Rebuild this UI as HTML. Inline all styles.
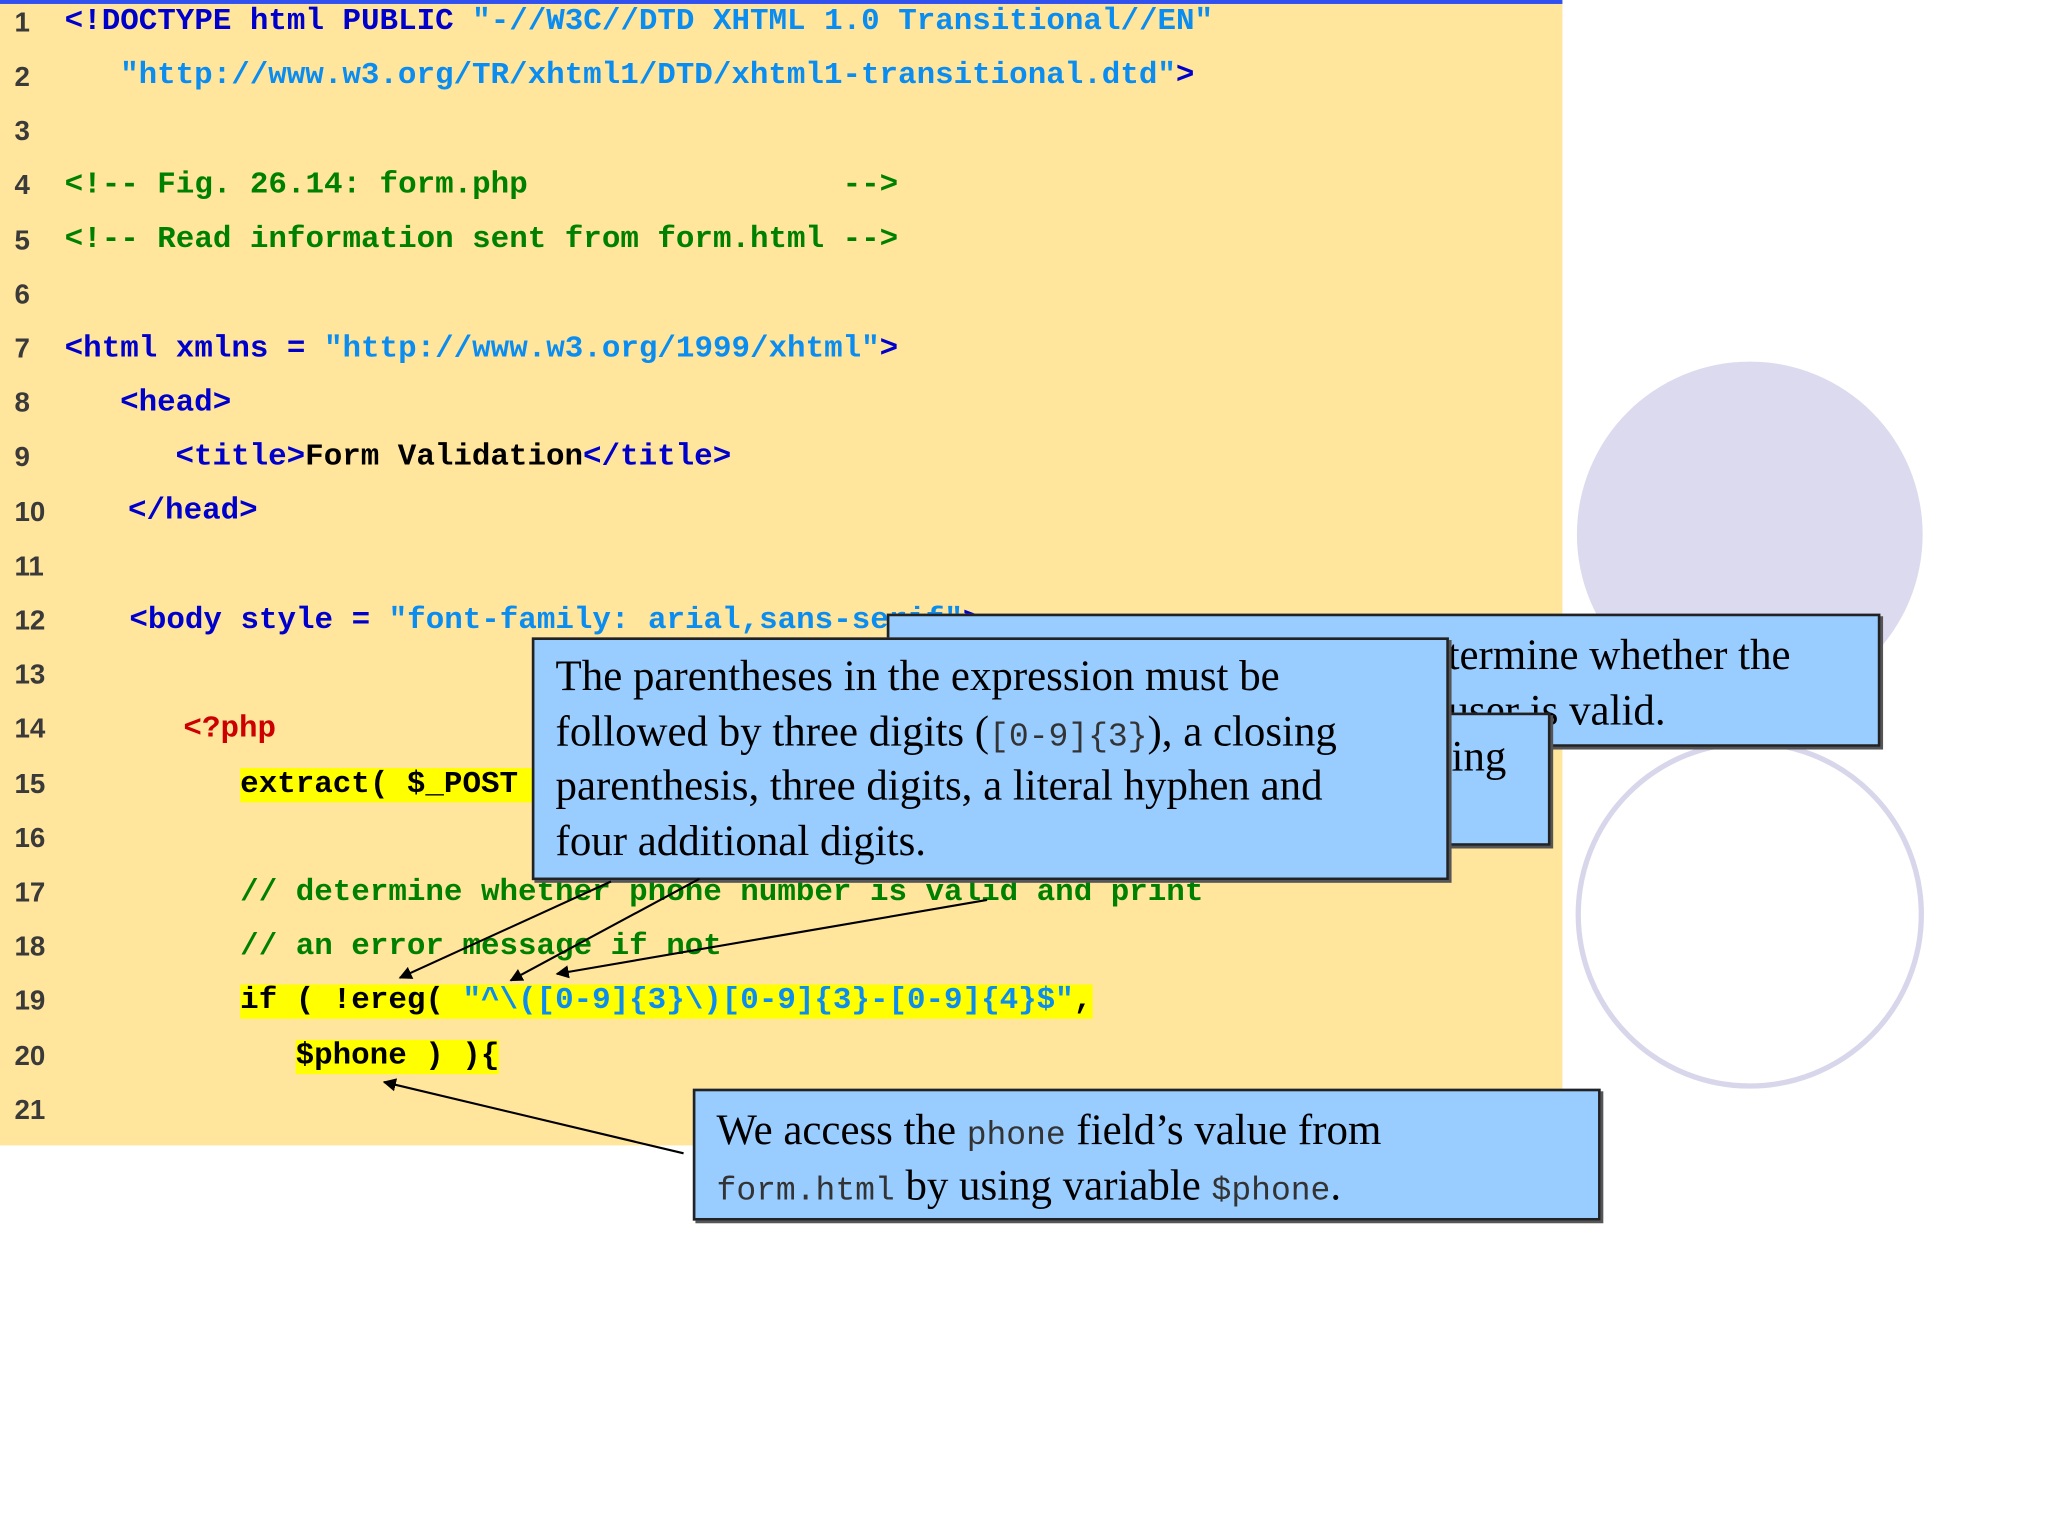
<!DOCTYPE html>
<html><head><style>
html,body{margin:0;padding:0;background:#fff;}
body{width:2048px;height:1536px;overflow:hidden;position:relative;}
#w{position:absolute;left:0;top:0;width:1552px;height:1164px;transform:scale(1.3196);transform-origin:0 0;}
.code{position:absolute;left:0;top:0;width:1184px;height:868px;background:#ffe69c;border-top:3px solid #3050f0;box-sizing:border-box;}
.n{position:absolute;left:11px;font:bold 21px "Liberation Sans",sans-serif;color:#3a3a3a;line-height:41px;}
.l{position:absolute;font:bold 23.4px "Liberation Mono",monospace;line-height:41px;white-space:pre;color:#000;}
.t{color:#0000cc}.s{color:#0a8cf0}.c{color:#008000}.p{color:#cc0000}
.hl{background:#ffff00;}
.box{position:absolute;background:#99ccff;border:2px solid #222;box-shadow:2px 2px 0 #555;box-sizing:border-box;font:32.5px "Liberation Serif",serif;color:#000;line-height:41.5px;overflow:hidden;}
.m{font:25px "Liberation Mono",monospace;color:#333;}
</style></head><body><div id="w">
<svg style="position:absolute;left:0;top:0" width="1552" height="1164">
<circle cx="1326" cy="405" r="131" fill="#dcdaee"/>
<circle cx="1326" cy="693" r="130" fill="none" stroke="#d8d6ea" stroke-width="4"/>
</svg>
<div class="code"></div>
<div class="n" style="top:-3px">1</div><div class="n" style="top:38px">2</div><div class="n" style="top:79px">3</div><div class="n" style="top:120px">4</div><div class="n" style="top:162px">5</div><div class="n" style="top:203px">6</div><div class="n" style="top:244px">7</div><div class="n" style="top:285px">8</div><div class="n" style="top:326px">9</div><div class="n" style="top:368px">10</div><div class="n" style="top:409px">11</div><div class="n" style="top:450px">12</div><div class="n" style="top:491px">13</div><div class="n" style="top:532px">14</div><div class="n" style="top:574px">15</div><div class="n" style="top:615px">16</div><div class="n" style="top:656px">17</div><div class="n" style="top:697px">18</div><div class="n" style="top:738px">19</div><div class="n" style="top:780px">20</div><div class="n" style="top:821px">21</div>
<div class="l" style="left:49px;top:-3px"><span class="t">&lt;!DOCTYPE html PUBLIC </span><span class="s">"-//W3C//DTD XHTML 1.0 Transitional//EN"</span></div>
<div class="l" style="left:91px;top:38px"><span class="s">"http://www.w3.org/TR/xhtml1/DTD/xhtml1-transitional.dtd"</span><span class="t">&gt;</span></div>
<div class="l c" style="left:49px;top:121px">&lt;!-- Fig. 26.14: form.php                 --&gt;</div>
<div class="l c" style="left:49px;top:162px">&lt;!-- Read information sent from form.html --&gt;</div>
<div class="l" style="left:49px;top:245px"><span class="t">&lt;html xmlns = </span><span class="s">"http://www.w3.org/1999/xhtml"</span><span class="t">&gt;</span></div>
<div class="l t" style="left:91px;top:286px">&lt;head&gt;</div>
<div class="l" style="left:133px;top:327px"><span class="t">&lt;title&gt;</span>Form Validation<span class="t">&lt;/title&gt;</span></div>
<div class="l t" style="left:97px;top:368px">&lt;/head&gt;</div>
<div class="l" style="left:98px;top:451px"><span class="t">&lt;body style = </span><span class="s">"font-family: arial,sans-serif"</span><span class="t">&gt;</span></div>
<div class="l p" style="left:139px;top:533px">&lt;?php</div>
<div class="l" style="left:182px;top:575px"><span class="hl">extract( $_POST );</span></div>
<div class="l c" style="left:182px;top:657px">// determine whether phone number is valid and print</div>
<div class="l c" style="left:182px;top:698px">// an error message if not</div>
<div class="l" style="left:182px;top:739px"><span class="hl">if ( !ereg( <span class="s">"^\([0-9]{3}\)[0-9]{3}-[0-9]{4}$"</span>,</span></div>
<div class="l" style="left:224px;top:781px"><span class="hl">$phone ) ){</span></div>
<div class="box" style="left:672px;top:465px;width:753px;height:101px;padding:10px 0 0 423px;white-space:nowrap">termine whether the<br>user is valid.</div>
<div class="box" style="left:600px;top:540px;width:575px;height:101px;padding:12px 0 0 498px;white-space:nowrap">ing</div>
<div class="box" style="left:403px;top:483px;width:695px;height:184px;padding:8px 0 0 16px;white-space:nowrap">The parentheses in the expression must be<br>followed by three digits (<span class="m">[0-9]{3}</span>), a closing<br>parenthesis, three digits, a literal hyphen and<br>four additional digits.</div>
<div class="box" style="left:525px;top:825px;width:688px;height:100px;padding:10px 0 0 16px;white-space:nowrap">We access the <span class="m">phone</span> field’s value from<br><span class="m">form.html</span> by using variable <span class="m">$phone</span>.</div>
<svg style="position:absolute;left:0;top:0" width="1552" height="1164">
<defs><marker id="a" markerWidth="10" markerHeight="10" refX="9" refY="5" orient="auto" markerUnits="userSpaceOnUse"><path d="M0,0 L10,5 L0,10 z" fill="#000"/></marker></defs>
<g stroke="#000" stroke-width="1.6" marker-end="url(#a)">
<line x1="463" y1="668" x2="303" y2="741"/>
<line x1="530" y1="666" x2="387" y2="743"/>
<line x1="748" y1="682" x2="422" y2="738"/>
<line x1="518" y1="874" x2="291" y2="820"/>
</g></svg>
</div></body></html>
